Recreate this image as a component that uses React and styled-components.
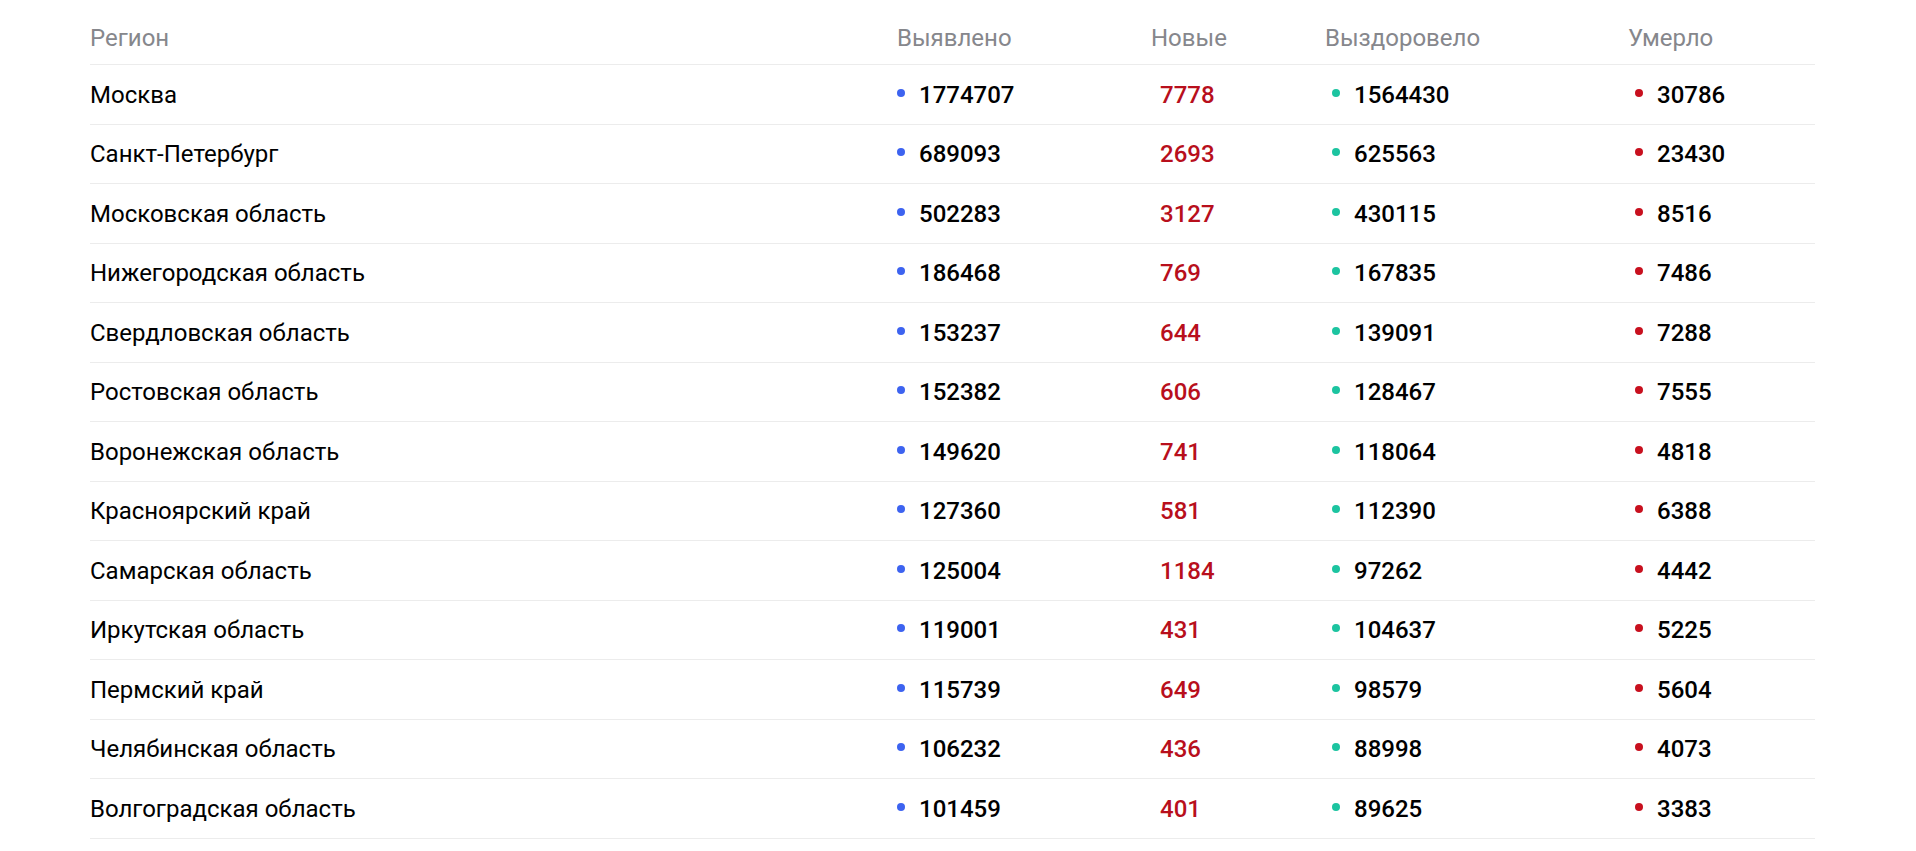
import styled, { createGlobalStyle } from "styled-components";

const GlobalStyle = createGlobalStyle`
  body {
    margin: 0;
    background: #ffffff;
    font-family: Roboto, "Noto Sans", sans-serif;
  }
`;

const columns = "807px 254px 174px 303px 187px";

const Table = styled.section`
  width: 1725px;
  margin-left: 90px;
`;

const HeadRow = styled.div`
  display: grid;
  grid-template-columns: ${columns};
  align-items: center;
  box-sizing: border-box;
  height: 65px;
  padding-top: 11px;
  border-bottom: 1px solid #ececec;
`;

const HeadCell = styled.div`
  font-size: 24px;
  font-weight: 400;
  color: #86878c;
`;

const Row = styled.div`
  display: grid;
  grid-template-columns: ${columns};
  align-items: center;
  box-sizing: border-box;
  height: 59.5px;
  padding-top: 1px;
  border-bottom: 1px solid #ececec;
`;

const Region = styled.div`
  font-size: 24px;
  color: #000000;
`;

const Cell = styled.div`
  display: flex;
  align-items: center;
  padding-left: ${(p) => p.$pad || 0}px;
  font-size: 24px;
  font-weight: 500;
  color: ${(p) => p.$color || "#000000"};
`;

const Dot = styled.span`
  width: 8px;
  height: 8px;
  border-radius: 50%;
  background: ${(p) => p.$color};
  margin-right: 14px;
  transform: translateY(-2px);
  flex-shrink: 0;
`;

const rows = [
  ["Москва", 1774707, 7778, 1564430, 30786],
  ["Санкт-Петербург", 689093, 2693, 625563, 23430],
  ["Московская область", 502283, 3127, 430115, 8516],
  ["Нижегородская область", 186468, 769, 167835, 7486],
  ["Свердловская область", 153237, 644, 139091, 7288],
  ["Ростовская область", 152382, 606, 128467, 7555],
  ["Воронежская область", 149620, 741, 118064, 4818],
  ["Красноярский край", 127360, 581, 112390, 6388],
  ["Самарская область", 125004, 1184, 97262, 4442],
  ["Иркутская область", 119001, 431, 104637, 5225],
  ["Пермский край", 115739, 649, 98579, 5604],
  ["Челябинская область", 106232, 436, 88998, 4073],
  ["Волгоградская область", 101459, 401, 89625, 3383],
];

export default function App() {
  return (
    <>
      <GlobalStyle />
      <Table>
        <HeadRow>
          <HeadCell>Регион</HeadCell>
          <HeadCell>Выявлено</HeadCell>
          <HeadCell>Новые</HeadCell>
          <HeadCell>Выздоровело</HeadCell>
          <HeadCell>Умерло</HeadCell>
        </HeadRow>
        {rows.map(([name, found, fresh, healed, dead]) => (
          <Row key={name}>
            <Region>{name}</Region>
            <Cell>
              <Dot $color="#3d63f0" />
              {found}
            </Cell>
            <Cell $pad={9} $color="#b80f1c">
              {fresh}
            </Cell>
            <Cell $pad={7}>
              <Dot $color="#1cc4a0" />
              {healed}
            </Cell>
            <Cell $pad={7}>
              <Dot $color="#c8101e" />
              {dead}
            </Cell>
          </Row>
        ))}
      </Table>
    </>
  );
}
